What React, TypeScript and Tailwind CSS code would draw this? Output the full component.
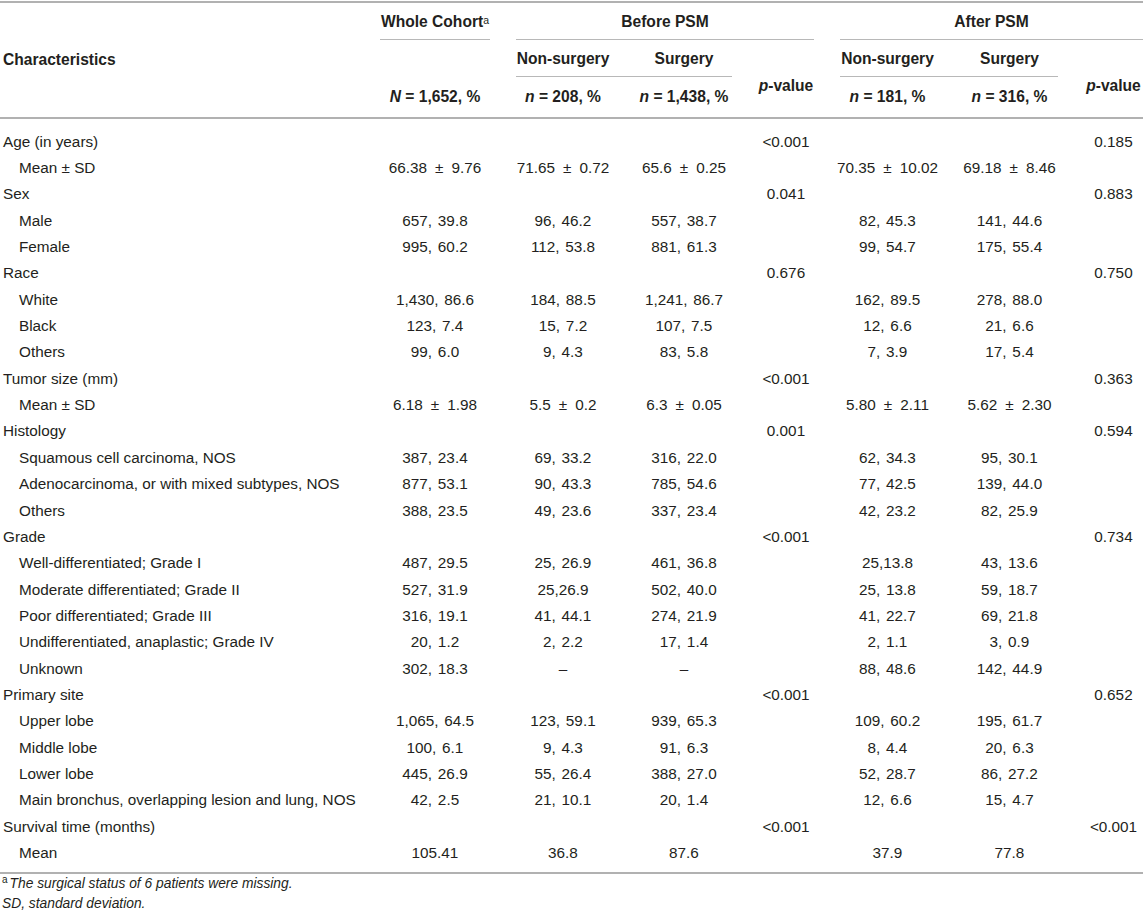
import React from "react";

type Row = {
  label: string;
  sub?: boolean;
  v?: string[]; // whole, bn, bs, an, as
  p1?: string;
  p2?: string;
};

const rows: Row[] = [
  { label: "Age (in years)", p1: "<0.001", p2: "0.185" },
  { label: "Mean \u00b1 SD", sub: true, v: ["66.38 \u00b1 9.76", "71.65 \u00b1 0.72", "65.6 \u00b1 0.25", "70.35 \u00b1 10.02", "69.18 \u00b1 8.46"] },
  { label: "Sex", p1: "0.041", p2: "0.883" },
  { label: "Male", sub: true, v: ["657, 39.8", "96, 46.2", "557, 38.7", "82, 45.3", "141, 44.6"] },
  { label: "Female", sub: true, v: ["995, 60.2", "112, 53.8", "881, 61.3", "99, 54.7", "175, 55.4"] },
  { label: "Race", p1: "0.676", p2: "0.750" },
  { label: "White", sub: true, v: ["1,430, 86.6", "184, 88.5", "1,241, 86.7", "162, 89.5", "278, 88.0"] },
  { label: "Black", sub: true, v: ["123, 7.4", "15, 7.2", "107, 7.5", "12, 6.6", "21, 6.6"] },
  { label: "Others", sub: true, v: ["99, 6.0", "9, 4.3", "83, 5.8", "7, 3.9", "17, 5.4"] },
  { label: "Tumor size (mm)", p1: "<0.001", p2: "0.363" },
  { label: "Mean \u00b1 SD", sub: true, v: ["6.18 \u00b1 1.98", "5.5 \u00b1 0.2", "6.3 \u00b1 0.05", "5.80 \u00b1 2.11", "5.62 \u00b1 2.30"] },
  { label: "Histology", p1: "0.001", p2: "0.594" },
  { label: "Squamous cell carcinoma, NOS", sub: true, v: ["387, 23.4", "69, 33.2", "316, 22.0", "62, 34.3", "95, 30.1"] },
  { label: "Adenocarcinoma, or with mixed subtypes, NOS", sub: true, v: ["877, 53.1", "90, 43.3", "785, 54.6", "77, 42.5", "139, 44.0"] },
  { label: "Others", sub: true, v: ["388, 23.5", "49, 23.6", "337, 23.4", "42, 23.2", "82, 25.9"] },
  { label: "Grade", p1: "<0.001", p2: "0.734" },
  { label: "Well-differentiated; Grade I", sub: true, v: ["487, 29.5", "25, 26.9", "461, 36.8", "25,13.8", "43, 13.6"] },
  { label: "Moderate differentiated; Grade II", sub: true, v: ["527, 31.9", "25,26.9", "502, 40.0", "25, 13.8", "59, 18.7"] },
  { label: "Poor differentiated; Grade III", sub: true, v: ["316, 19.1", "41, 44.1", "274, 21.9", "41, 22.7", "69, 21.8"] },
  { label: "Undifferentiated, anaplastic; Grade IV", sub: true, v: ["20, 1.2", "2, 2.2", "17, 1.4", "2, 1.1", "3, 0.9"] },
  { label: "Unknown", sub: true, v: ["302, 18.3", "\u2013", "\u2013", "88, 48.6", "142, 44.9"] },
  { label: "Primary site", p1: "<0.001", p2: "0.652" },
  { label: "Upper lobe", sub: true, v: ["1,065, 64.5", "123, 59.1", "939, 65.3", "109, 60.2", "195, 61.7"] },
  { label: "Middle lobe", sub: true, v: ["100, 6.1", "9, 4.3", "91, 6.3", "8, 4.4", "20, 6.3"] },
  { label: "Lower lobe", sub: true, v: ["445, 26.9", "55, 26.4", "388, 27.0", "52, 28.7", "86, 27.2"] },
  { label: "Main bronchus, overlapping lesion and lung, NOS", sub: true, v: ["42, 2.5", "21, 10.1", "20, 1.4", "12, 6.6", "15, 4.7"] },
  { label: "Survival time (months)", p1: "<0.001", p2: "<0.001" },
  { label: "Mean", sub: true, v: ["105.41", "36.8", "87.6", "37.9", "77.8"] },
];

const GRID = "grid grid-cols-[367px_136px_120px_122px_82px_121px_123px_72px]";

function Val({ s }: { s: string }) {
  if (s.includes("\u00b1")) {
    const [a, b] = s.split(" \u00b1 ");
    return (
      <span>
        {a}
        <span className="mx-[8px]">{"\u00b1"}</span>
        {b}
      </span>
    );
  }
  return <span className="[word-spacing:1.5px]">{s}</span>;
}

function Cell({ s, last }: { s: string; last?: boolean }) {
  return (
    <div className={`flex items-center justify-center whitespace-nowrap ${last ? "pl-[13px]" : "px-[13px]"}`}>
      <Val s={s} />
    </div>
  );
}

export default function App() {
  return (
    <div
      className="w-[1143px] bg-white pt-[1px] text-[15.3px] text-[#231f20]"
      style={{ fontFamily: '"Liberation Sans", Arial, sans-serif' }}
    >
      {/* Header */}
      <div className={`${GRID} grid-rows-[37px_37px_40px] border-t-2 border-b-2 border-[#b1b1b1] text-[15.6px] font-bold`}>
        <div className="col-start-1 row-start-1 row-span-3 flex items-center pl-[3px]">Characteristics</div>

        <div className="col-start-2 row-start-1 px-[13px]">
          <div className="flex h-full items-center justify-center border-b border-[#b8b8b8] pt-[1px]">
            Whole Cohort<sup className="relative -top-[2px] text-[10.5px] font-normal">a</sup>
          </div>
        </div>
        <div className="col-start-3 col-span-3 row-start-1 px-[13px]">
          <div className="flex h-full items-center justify-center border-b border-[#b8b8b8] pt-[1px]">Before PSM</div>
        </div>
        <div className="col-start-6 col-span-3 row-start-1 pl-[13px]">
          <div className="flex h-full items-center justify-center border-b border-[#b8b8b8] pt-[1px]">After PSM</div>
        </div>

        <div className="col-start-3 row-start-2 pl-[13px]">
          <div className="flex h-full items-center justify-center border-b border-[#b8b8b8] pr-[13px] pt-[1px]">Non-surgery</div>
        </div>
        <div className="col-start-4 row-start-2 pr-[13px]">
          <div className="flex h-full items-center justify-center border-b border-[#b8b8b8] pl-[13px] pt-[1px]">Surgery</div>
        </div>
        <div className="col-start-5 row-start-2 row-span-2 flex items-center justify-center pt-[15px]">
          <span><i>p</i>-value</span>
        </div>
        <div className="col-start-6 row-start-2 pl-[13px]">
          <div className="flex h-full items-center justify-center border-b border-[#b8b8b8] pr-[13px] pt-[1px]">Non-surgery</div>
        </div>
        <div className="col-start-7 row-start-2 pr-[13px]">
          <div className="flex h-full items-center justify-center border-b border-[#b8b8b8] pl-[13px] pt-[1px]">Surgery</div>
        </div>
        <div className="col-start-8 row-start-2 row-span-2 flex items-center justify-center pt-[15px] pl-[13px]">
          <span><i>p</i>-value</span>
        </div>

        <div className="col-start-2 row-start-3 flex items-center justify-center px-[10px] whitespace-nowrap">
          <i>N</i>&nbsp;=&nbsp;1,652, %
        </div>
        <div className="col-start-3 row-start-3 flex items-center justify-center px-[10px] whitespace-nowrap">
          <i>n</i>&nbsp;=&nbsp;208, %
        </div>
        <div className="col-start-4 row-start-3 flex items-center justify-center px-[10px] whitespace-nowrap">
          <i>n</i>&nbsp;=&nbsp;1,438, %
        </div>
        <div className="col-start-6 row-start-3 flex items-center justify-center px-[10px] whitespace-nowrap">
          <i>n</i>&nbsp;=&nbsp;181, %
        </div>
        <div className="col-start-7 row-start-3 flex items-center justify-center px-[10px] whitespace-nowrap">
          <i>n</i>&nbsp;=&nbsp;316, %
        </div>
      </div>

      {/* Body */}
      <div className={`${GRID} auto-rows-[26.35px] border-b-2 border-[#b1b1b1] pt-[10px] pb-[5px]`}>
        {rows.map((r, i) => {
          const v = r.v ?? ["", "", "", "", ""];
          return (
            <React.Fragment key={i}>
              <div className={`flex items-center whitespace-nowrap ${r.sub ? "pl-[19px]" : "pl-[3px]"}`}>{r.label}</div>
              <Cell s={v[0]} />
              <Cell s={v[1]} />
              <Cell s={v[2]} />
              <Cell s={r.p1 ?? ""} />
              <Cell s={v[3]} />
              <Cell s={v[4]} />
              <Cell s={r.p2 ?? ""} last />
            </React.Fragment>
          );
        })}
      </div>

      {/* Footnotes */}
      <div className="pl-[2px] text-[13.8px] leading-[20px] italic">
        <div>
          <sup className="mr-[2px] text-[10px] not-italic">a</sup>The surgical status of 6 patients were missing.
        </div>
        <div>SD, standard deviation.</div>
      </div>
    </div>
  );
}
